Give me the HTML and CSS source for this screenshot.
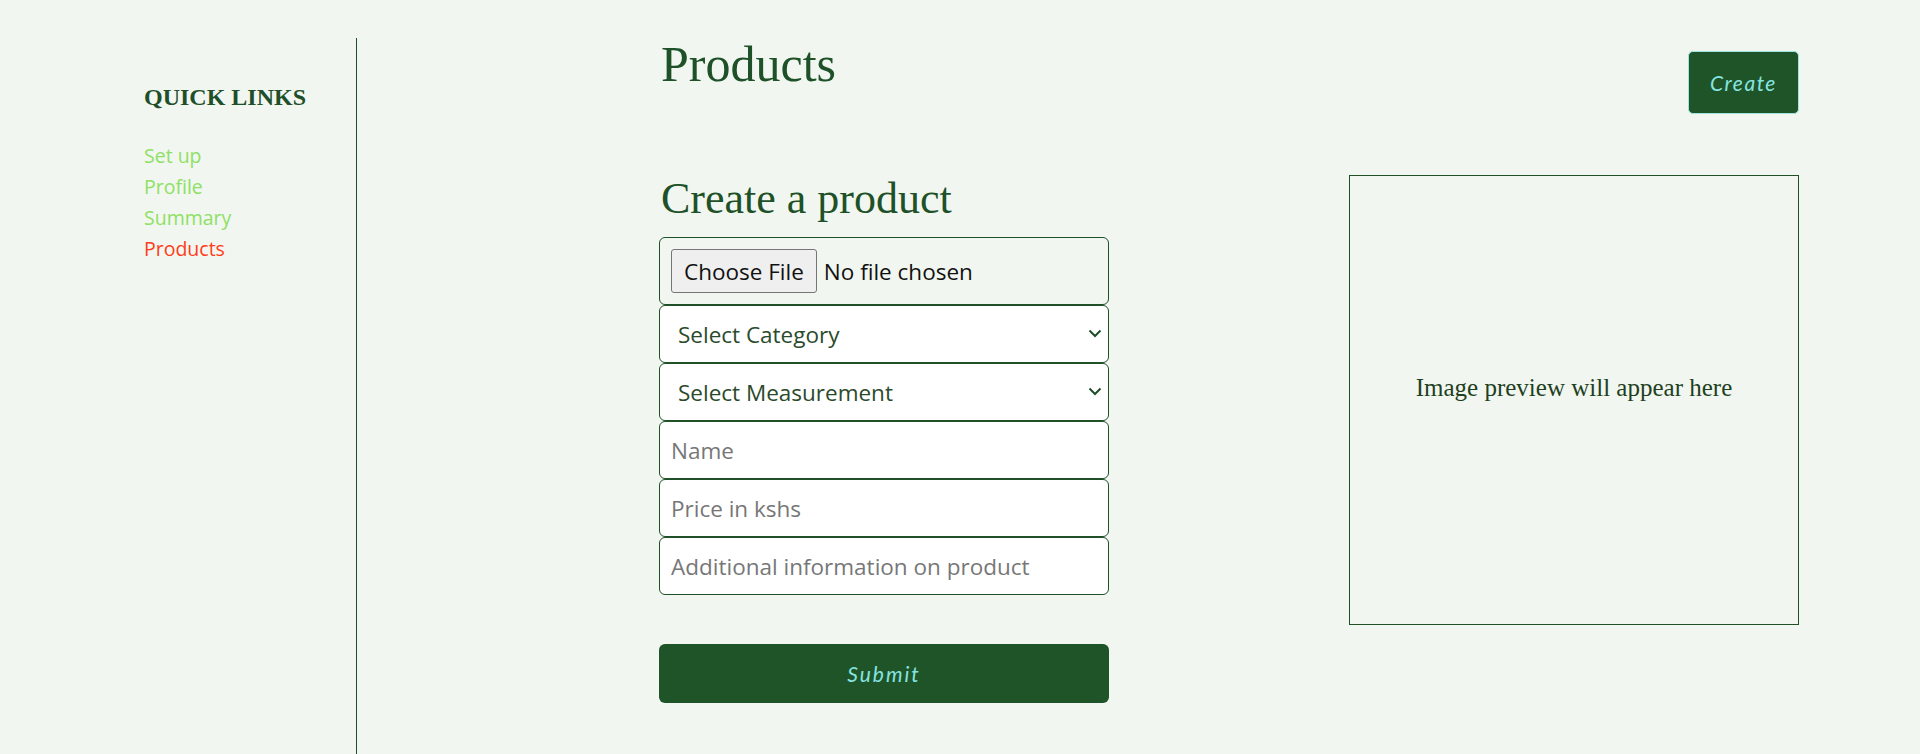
FILE: index.html
```html
<!DOCTYPE html>
<html lang="en">
<head>
<meta charset="utf-8">
<title>Products</title>
<link rel="stylesheet" href="styles.css">
</head>
<body>
<div class="page">
  <aside class="sidebar">
    <h3 class="sidebar-title">QUICK LINKS</h3>
    <ul class="links">
      <li><a class="link" href="#">Set up</a></li>
      <li><a class="link" href="#">Profile</a></li>
      <li><a class="link" href="#">Summary</a></li>
      <li><a class="link link-active" href="#">Products</a></li>
    </ul>
  </aside>
  <main class="main">
    <div class="header">
      <h1 class="title">Products</h1>
      <button class="btn btn-create" type="button">Create</button>
    </div>
    <div class="columns">
      <section class="form-col">
        <h2 class="subtitle">Create a product</h2>
        <form class="form">
          <div class="field file-field">
            <input class="file-input" type="file">
          </div>
          <div class="select-wrap">
            <select class="field select">
              <option>Select Category</option>
            </select>
            <svg class="chevron" width="14" height="9" viewBox="0 0 14 9"><path d="M1.5 1.5 L7 7 L12.5 1.5" fill="none" stroke="#1f4f2a" stroke-width="2"/></svg>
          </div>
          <div class="select-wrap">
            <select class="field select">
              <option>Select Measurement</option>
            </select>
            <svg class="chevron" width="14" height="9" viewBox="0 0 14 9"><path d="M1.5 1.5 L7 7 L12.5 1.5" fill="none" stroke="#1f4f2a" stroke-width="2"/></svg>
          </div>
          <input class="field text" type="text" placeholder="Name">
          <input class="field text" type="text" placeholder="Price in kshs">
          <input class="field text" type="text" placeholder="Additional information on product">
          <button class="btn btn-submit" type="button">Submit</button>
        </form>
      </section>
      <div class="preview">
        <p class="preview-text">Image preview will appear here</p>
      </div>
    </div>
  </main>
</div>
</body>
</html>
```

FILE: styles.css
```css
html, body {
  margin: 0;
  padding: 0;
}

body {
  background: #f1f7f0;
  font-family: "Open Sans", "Noto Sans", sans-serif;
  color: #1f4f2a;
}

.page {
  display: flex;
  min-height: 875px;
}

.sidebar {
  width: 357px;
  flex: 0 0 357px;
  margin-top: 38px;
  border-right: 1px solid #1f4f2a;
  padding: 45px 0 0 144px;
  box-sizing: border-box;
}

.sidebar-title {
  margin: 0 0 29px;
  font-family: "Liberation Serif", serif;
  font-size: 24px;
  line-height: 28px;
  font-weight: bold;
  color: #1f4f2a;
}

.links {
  list-style: none;
  margin: 0;
  padding: 0;
}

.links li {
  line-height: 31px;
  font-size: 19.5px;
}

.link {
  color: #8fe064;
  text-decoration: none;
}

.link-active {
  color: #ff3c1a;
}

.main {
  flex: 1;
  padding: 35px 0 0 302px;
}

.header {
  width: 1140px;
  display: flex;
  justify-content: space-between;
  align-items: flex-start;
  margin-bottom: 61px;
}

.title {
  margin: 0;
  font-family: "Liberation Serif", serif;
  font-weight: normal;
  font-size: 50px;
  line-height: 58px;
  color: #1f5129;
  padding-left: 2px;
}

.btn {
  background: #1f5429;
  color: #86e4e0;
  font-family: "Lato", sans-serif;
  font-style: italic;
  border-radius: 6px;
  cursor: pointer;
}

.btn-create {
  margin-top: 16px;
  width: 111px;
  height: 63px;
  border: 1px solid #9fe3dc;
  border-radius: 5px;
  font-size: 21px;
  letter-spacing: 1.5px;
  padding: 0;
}

.columns {
  width: 1140px;
  display: flex;
  justify-content: space-between;
  align-items: flex-start;
}

.form-col {
  width: 450px;
}

.subtitle {
  margin: 0 0 14px;
  font-family: "Liberation Serif", serif;
  font-weight: normal;
  font-size: 44px;
  line-height: 48px;
  color: #1f5129;
  padding-left: 2px;
}

.form {
  display: flex;
  flex-direction: column;
}

.field {
  box-sizing: border-box;
  width: 450px;
  height: 58px;
  border: 1px solid #1f5129;
  border-radius: 6px;
  background: #ffffff;
  font-family: "Open Sans", "Noto Sans", sans-serif;
  font-size: 22.5px;
  margin: 0;
}

.file-field {
  height: 68px;
  background: transparent;
  padding: 11px;
}

.file-input {
  font-family: "Open Sans", "Noto Sans", sans-serif;
  font-size: 22.5px;
  color: #111111;
}

.file-input::file-selector-button {
  font-family: "Open Sans", "Noto Sans", sans-serif;
  font-size: 22.5px;
  height: 44px;
  padding: 0 12px;
  margin-right: 7px;
  background: #efefef;
  border: 1px solid #767676;
  border-radius: 3px;
  color: #111111;
}

.select-wrap {
  position: relative;
}

.select {
  appearance: none;
  -webkit-appearance: none;
  padding: 0 40px 0 18px;
  color: #2b4a2b;
}

.chevron {
  position: absolute;
  right: 7px;
  top: 24px;
}

.text {
  padding: 0 11px;
  color: #1f4f2a;
}

.text::placeholder {
  color: #777777;
}

.btn-submit {
  margin-top: 49px;
  width: 450px;
  height: 59px;
  border: none;
  font-size: 21px;
  letter-spacing: 2px;
}

.preview {
  box-sizing: border-box;
  width: 450px;
  height: 450px;
  border: 1px solid #1f5129;
  display: flex;
  align-items: center;
  justify-content: center;
  padding-bottom: 24px;
}

.preview-text {
  margin: 0;
  font-family: "Liberation Serif", serif;
  font-size: 25px;
  color: #1f3f22;
}
```
